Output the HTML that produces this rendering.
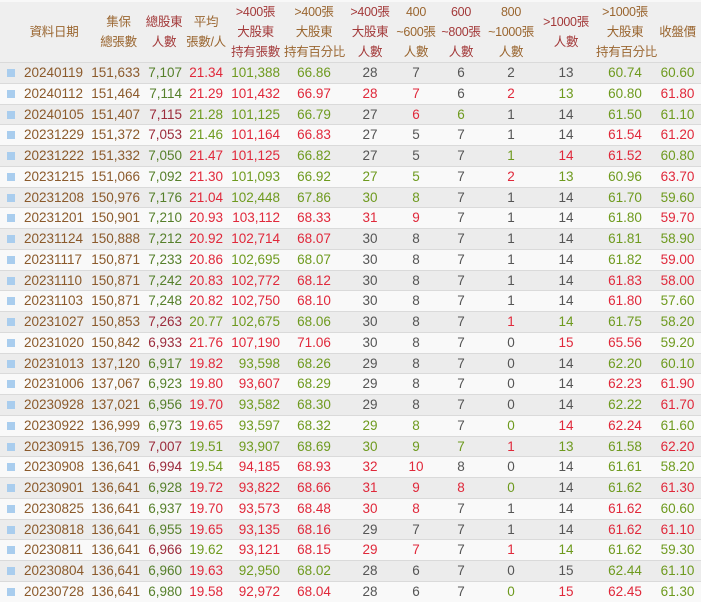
<!DOCTYPE html>
<html><head><meta charset="utf-8"><style>
*{margin:0;padding:0;box-sizing:border-box}
body{width:701px;height:599px;overflow:hidden;background:#f7f7f7;font-family:"Liberation Sans","Noto Sans CJK TC",sans-serif}
.row,.hd{display:grid;grid-template-columns:90px 53px 42px 42px 57px 60px 52px 40px 50px 50px 60px 58px 47px}
.row{height:20.76px;border-top:1px solid #dadada;font-size:13.5px;line-height:19.5px;color:#555}
.row:nth-child(odd){background:#ececec}
.row:nth-child(even){background:#f9f9f9}
.row span{white-space:nowrap}
.row span:nth-child(1){padding-left:7px;color:#8b5a2b}
.row span:nth-child(1)::before{content:"";display:inline-block;width:8px;height:8px;background:#a9cdee;margin-right:9px;vertical-align:0px}
.row span:nth-child(2){text-align:right;padding-right:3px;color:#8b5a2b}
.row span:nth-child(3){text-align:right;padding-right:3px}
.row span:nth-child(4){text-align:right;padding-right:4px}
.row span:nth-child(5){text-align:right;padding-right:4px}
.row span:nth-child(n+6){text-align:center}
.g{color:#6e9a1e!important}.r{color:#e0283a!important}.G{color:#557f2a!important}.R{color:#9b2b3b!important}
.hd{height:62px;background:#efefef;border-top:2px solid #f8f8f8;font-size:12.5px;line-height:20px;text-align:center}
.hd div{display:flex;flex-direction:column;justify-content:center;white-space:nowrap;letter-spacing:-0.3px}
.b{color:#9a6630}.m{color:#a33a3a}
</style></head><body>
<div class="hd">
<div class="b" style="padding-left:18px">資料日期</div>
<div class="b" style="padding-left:4px">集保<br>總張數</div>
<div class="m">總股東<br>人數</div>
<div class="b">平均<br>張數/人</div>
<div class="m">&gt;400張<br>大股東<br>持有張數</div>
<div class="b">&gt;400張<br>大股東<br>持有百分比</div>
<div class="m">&gt;400張<br>大股東<br>人數</div>
<div class="b">400<br>~600張<br>人數</div>
<div class="m">600<br>~800張<br>人數</div>
<div class="b">800<br>~1000張<br>人數</div>
<div class="m">&gt;1000張<br>人數</div>
<div class="b">&gt;1000張<br>大股東<br>持有百分比</div>
<div class="b">收盤價</div>
</div>
<div id="t">
<div class="row"><span>20240119</span><span>151,633</span><span class="G">7,107</span><span class="r">21.34</span><span class="g">101,388</span><span class="g">66.86</span><span>28</span><span>7</span><span>6</span><span>2</span><span>13</span><span class="g">60.74</span><span class="g">60.60</span></div>
<div class="row"><span>20240112</span><span>151,464</span><span class="G">7,114</span><span class="r">21.29</span><span class="r">101,432</span><span class="r">66.97</span><span class="r">28</span><span class="r">7</span><span>6</span><span class="r">2</span><span class="g">13</span><span class="g">60.80</span><span class="r">61.80</span></div>
<div class="row"><span>20240105</span><span>151,407</span><span class="R">7,115</span><span class="g">21.28</span><span class="g">101,125</span><span class="g">66.79</span><span>27</span><span class="r">6</span><span class="g">6</span><span>1</span><span>14</span><span class="g">61.50</span><span class="g">61.10</span></div>
<div class="row"><span>20231229</span><span>151,372</span><span class="R">7,053</span><span class="g">21.46</span><span class="r">101,164</span><span class="r">66.83</span><span>27</span><span>5</span><span>7</span><span>1</span><span>14</span><span class="r">61.54</span><span class="r">61.20</span></div>
<div class="row"><span>20231222</span><span>151,332</span><span class="G">7,050</span><span class="r">21.47</span><span class="r">101,125</span><span class="g">66.82</span><span>27</span><span>5</span><span>7</span><span class="g">1</span><span class="r">14</span><span class="r">61.52</span><span class="g">60.80</span></div>
<div class="row"><span>20231215</span><span>151,066</span><span class="G">7,092</span><span class="r">21.30</span><span class="g">101,093</span><span class="g">66.92</span><span class="g">27</span><span class="g">5</span><span>7</span><span class="r">2</span><span class="g">13</span><span class="g">60.96</span><span class="r">63.70</span></div>
<div class="row"><span>20231208</span><span>150,976</span><span class="G">7,176</span><span class="r">21.04</span><span class="g">102,448</span><span class="g">67.86</span><span class="g">30</span><span class="g">8</span><span>7</span><span>1</span><span>14</span><span class="g">61.70</span><span class="g">59.60</span></div>
<div class="row"><span>20231201</span><span>150,901</span><span class="G">7,210</span><span class="r">20.93</span><span class="r">103,112</span><span class="r">68.33</span><span class="r">31</span><span class="r">9</span><span>7</span><span>1</span><span>14</span><span class="g">61.80</span><span class="r">59.70</span></div>
<div class="row"><span>20231124</span><span>150,888</span><span class="G">7,212</span><span class="r">20.92</span><span class="r">102,714</span><span class="r">68.07</span><span>30</span><span>8</span><span>7</span><span>1</span><span>14</span><span class="g">61.81</span><span class="g">58.90</span></div>
<div class="row"><span>20231117</span><span>150,871</span><span class="G">7,233</span><span class="r">20.86</span><span class="g">102,695</span><span class="g">68.07</span><span>30</span><span>8</span><span>7</span><span>1</span><span>14</span><span class="g">61.82</span><span class="r">59.00</span></div>
<div class="row"><span>20231110</span><span>150,871</span><span class="G">7,242</span><span class="r">20.83</span><span class="r">102,772</span><span class="r">68.12</span><span>30</span><span>8</span><span>7</span><span>1</span><span>14</span><span class="r">61.83</span><span class="r">58.00</span></div>
<div class="row"><span>20231103</span><span>150,871</span><span class="G">7,248</span><span class="r">20.82</span><span class="r">102,750</span><span class="r">68.10</span><span>30</span><span>8</span><span>7</span><span>1</span><span>14</span><span class="r">61.80</span><span class="g">57.60</span></div>
<div class="row"><span>20231027</span><span>150,853</span><span class="R">7,263</span><span class="g">20.77</span><span class="g">102,675</span><span class="g">68.06</span><span>30</span><span>8</span><span>7</span><span class="r">1</span><span class="g">14</span><span class="g">61.75</span><span class="g">58.20</span></div>
<div class="row"><span>20231020</span><span>150,842</span><span class="R">6,933</span><span class="r">21.76</span><span class="r">107,190</span><span class="r">71.06</span><span>30</span><span>8</span><span>7</span><span>0</span><span class="r">15</span><span class="r">65.56</span><span class="g">59.20</span></div>
<div class="row"><span>20231013</span><span>137,120</span><span class="G">6,917</span><span class="r">19.82</span><span class="g">93,598</span><span class="g">68.26</span><span>29</span><span>8</span><span>7</span><span>0</span><span>14</span><span class="g">62.20</span><span class="g">60.10</span></div>
<div class="row"><span>20231006</span><span>137,067</span><span class="G">6,923</span><span class="r">19.80</span><span class="r">93,607</span><span class="g">68.29</span><span>29</span><span>8</span><span>7</span><span>0</span><span>14</span><span class="r">62.23</span><span class="r">61.90</span></div>
<div class="row"><span>20230928</span><span>137,021</span><span class="G">6,956</span><span class="r">19.70</span><span class="g">93,582</span><span class="g">68.30</span><span>29</span><span>8</span><span>7</span><span>0</span><span>14</span><span class="g">62.22</span><span class="r">61.70</span></div>
<div class="row"><span>20230922</span><span>136,999</span><span class="G">6,973</span><span class="r">19.65</span><span class="g">93,597</span><span class="g">68.32</span><span class="g">29</span><span class="g">8</span><span>7</span><span class="g">0</span><span class="r">14</span><span class="r">62.24</span><span class="g">61.60</span></div>
<div class="row"><span>20230915</span><span>136,709</span><span class="R">7,007</span><span class="g">19.51</span><span class="g">93,907</span><span class="g">68.69</span><span class="g">30</span><span class="g">9</span><span class="g">7</span><span class="r">1</span><span class="g">13</span><span class="g">61.58</span><span class="r">62.20</span></div>
<div class="row"><span>20230908</span><span>136,641</span><span class="R">6,994</span><span class="g">19.54</span><span class="r">94,185</span><span class="r">68.93</span><span class="r">32</span><span class="r">10</span><span>8</span><span>0</span><span>14</span><span class="g">61.61</span><span class="g">58.20</span></div>
<div class="row"><span>20230901</span><span>136,641</span><span class="G">6,928</span><span class="r">19.72</span><span class="r">93,822</span><span class="r">68.66</span><span class="r">31</span><span class="r">9</span><span class="r">8</span><span class="g">0</span><span>14</span><span class="g">61.62</span><span class="r">61.30</span></div>
<div class="row"><span>20230825</span><span>136,641</span><span class="G">6,937</span><span class="r">19.70</span><span class="r">93,573</span><span class="r">68.48</span><span class="r">30</span><span class="r">8</span><span>7</span><span>1</span><span>14</span><span class="r">61.62</span><span class="g">60.60</span></div>
<div class="row"><span>20230818</span><span>136,641</span><span class="G">6,955</span><span class="r">19.65</span><span class="r">93,135</span><span class="r">68.16</span><span>29</span><span>7</span><span>7</span><span>1</span><span>14</span><span class="r">61.62</span><span class="r">61.10</span></div>
<div class="row"><span>20230811</span><span>136,641</span><span class="R">6,966</span><span class="g">19.62</span><span class="r">93,121</span><span class="r">68.15</span><span class="r">29</span><span class="r">7</span><span>7</span><span class="r">1</span><span class="g">14</span><span class="g">61.62</span><span class="g">59.30</span></div>
<div class="row"><span>20230804</span><span>136,641</span><span class="G">6,960</span><span class="r">19.63</span><span class="g">92,950</span><span class="g">68.02</span><span>28</span><span>6</span><span>7</span><span>0</span><span>15</span><span class="g">62.44</span><span class="g">61.10</span></div>
<div class="row"><span>20230728</span><span>136,641</span><span class="G">6,980</span><span class="r">19.58</span><span class="r">92,972</span><span class="r">68.04</span><span>28</span><span>6</span><span>7</span><span class="g">0</span><span class="r">15</span><span class="r">62.45</span><span class="g">61.30</span></div>
</div>
</body></html>
